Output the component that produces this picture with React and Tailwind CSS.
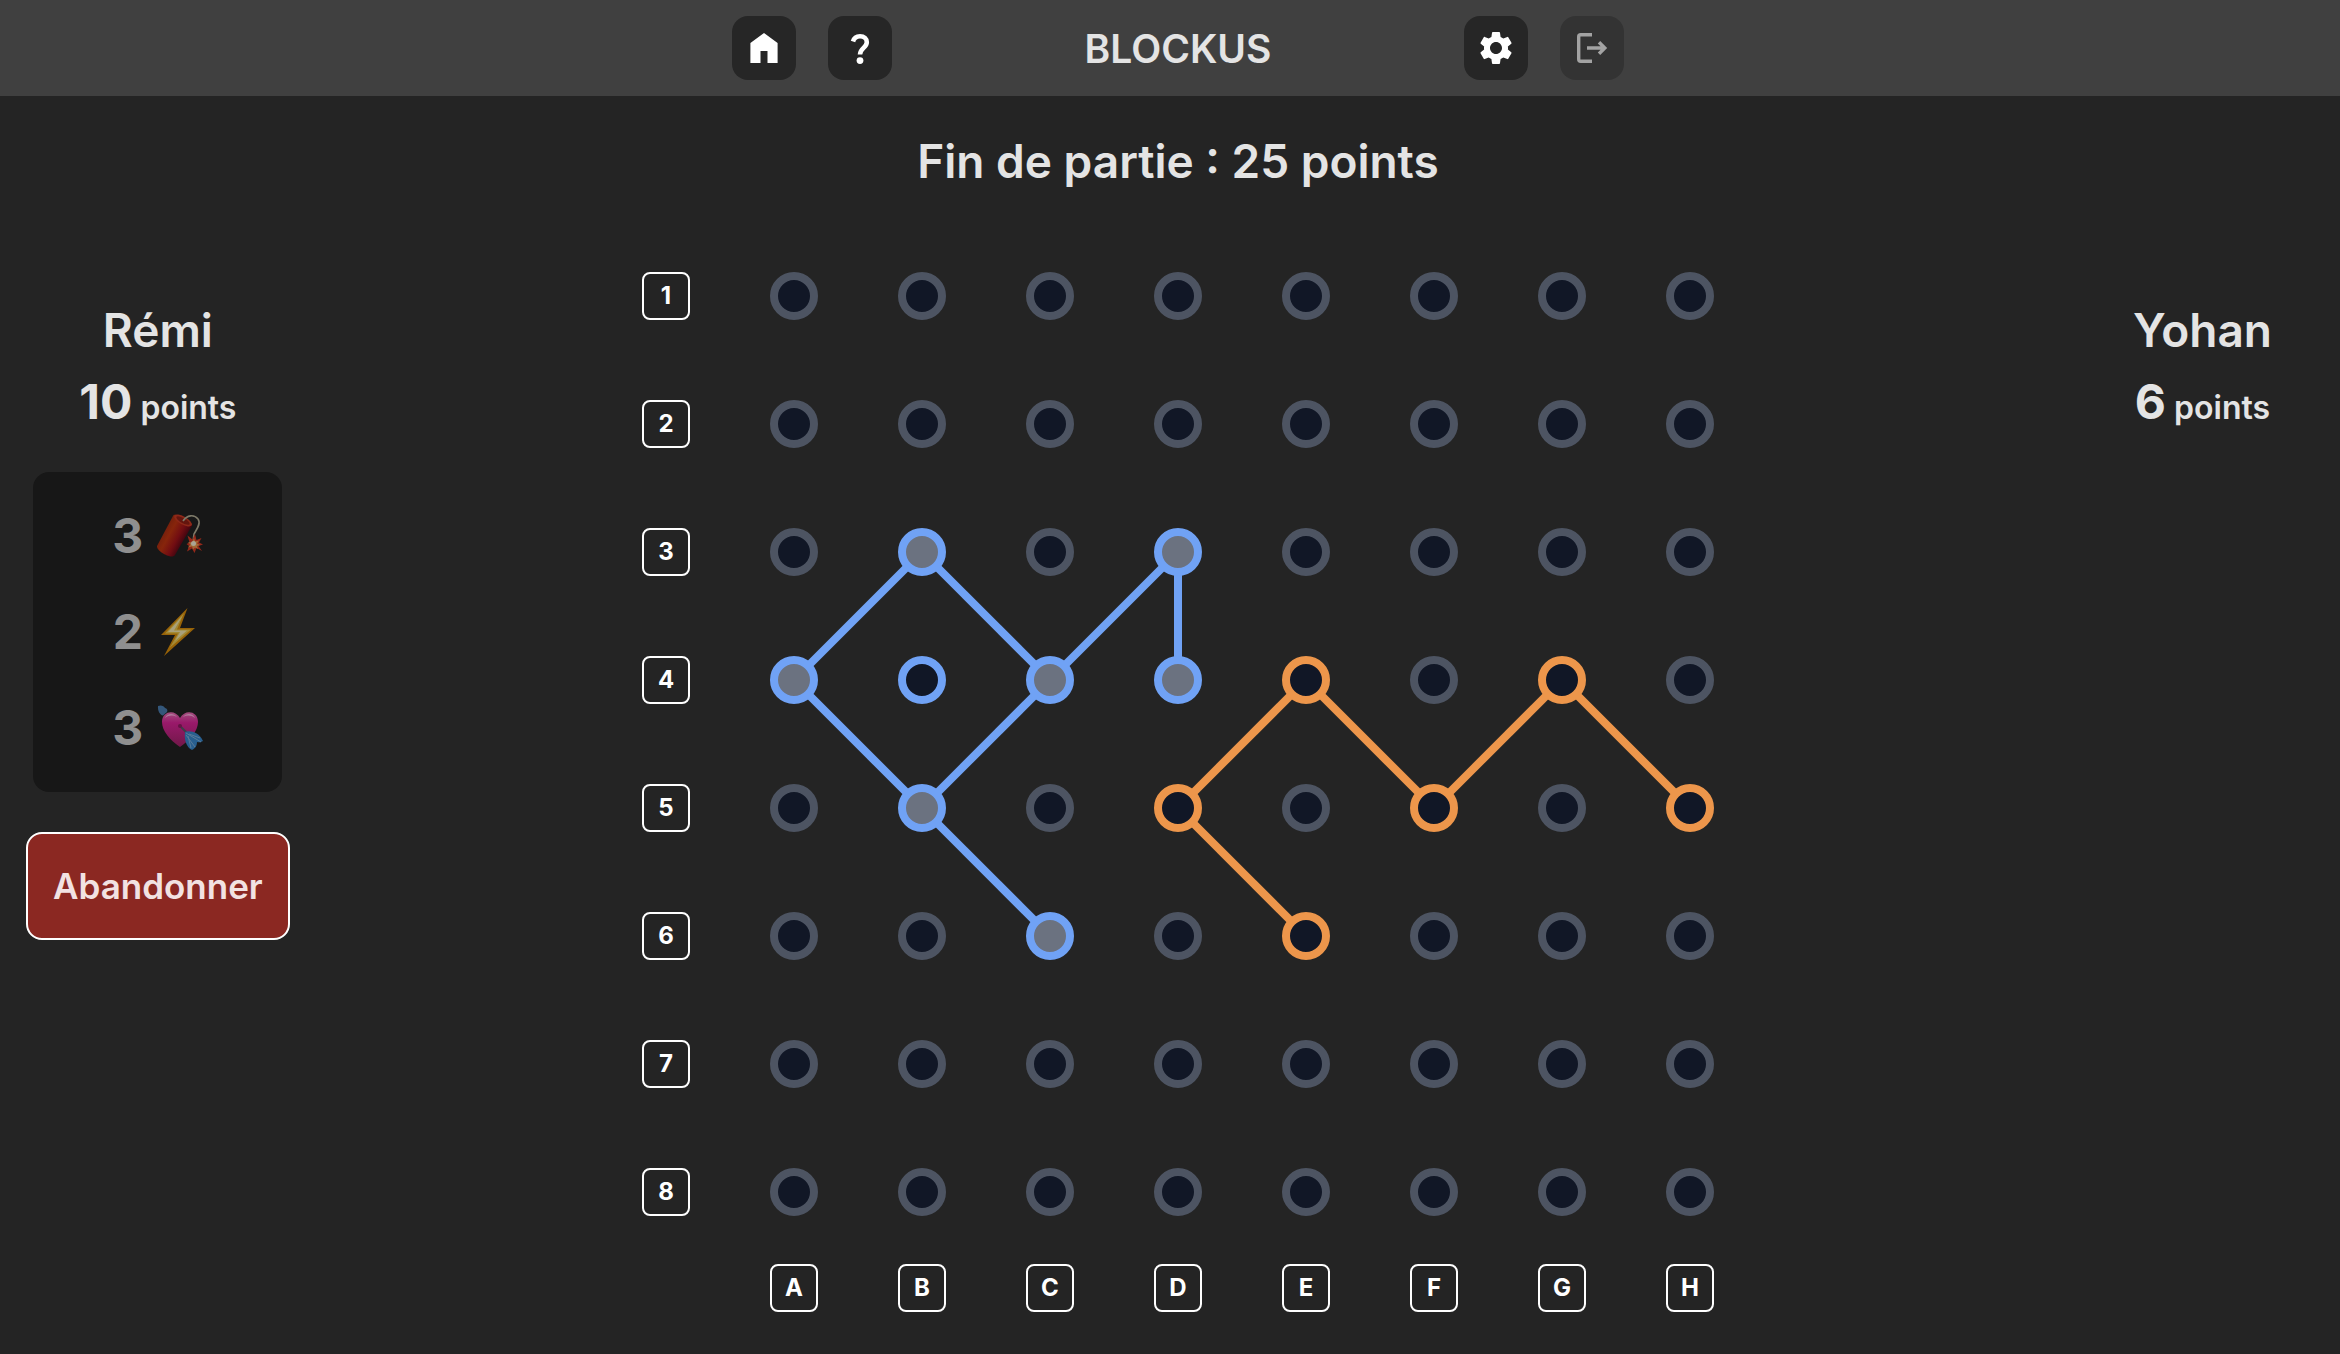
const SIZE = 8;
const STEP = 128;
const BLUE = "#70a2f5";
const ORANGE = "#ed964b";

const ROWS = ["1", "2", "3", "4", "5", "6", "7", "8"];
const COLS = ["A", "B", "C", "D", "E", "F", "G", "H"];

const NODES = {
  B3: "blueFull",
  D3: "blueFull",
  A4: "blueFull",
  B4: "blue",
  C4: "blueFull",
  D4: "blueFull",
  B5: "blueFull",
  C6: "blueFull",
  E4: "orange",
  G4: "orange",
  D5: "orange",
  F5: "orange",
  H5: "orange",
  E6: "orange",
};

const NODE_CLASSES = {
  empty: "border-[#4d5462] bg-[#111726]",
  blue: "border-[#70a2f5] bg-[#111726]",
  blueFull: "border-[#70a2f5] bg-[#6b7280]",
  orange: "border-[#ed964b] bg-[#111726]",
};

const LINKS = [
  ["A4", "B3", BLUE],
  ["B3", "C4", BLUE],
  ["C4", "D3", BLUE],
  ["D3", "D4", BLUE],
  ["A4", "B5", BLUE],
  ["B5", "C4", BLUE],
  ["B5", "C6", BLUE],
  ["D5", "E4", ORANGE],
  ["E4", "F5", ORANGE],
  ["F5", "G4", ORANGE],
  ["G4", "H5", ORANGE],
  ["D5", "E6", ORANGE],
];

function center(id) {
  return {
    x: COLS.indexOf(id[0]) * STEP + 24,
    y: ROWS.indexOf(id[1]) * STEP + 24,
  };
}

function IconButton({ label, disabled, children }) {
  return (
    <button
      type="button"
      aria-label={label}
      disabled={disabled}
      className="flex size-16 items-center justify-center rounded-2xl bg-[#262626] text-white disabled:bg-[#333333] disabled:text-[#a3a3a3]"
    >
      {children}
    </button>
  );
}

function HomeIcon() {
  return (
    <svg viewBox="0 0 40 40" className="size-10" fill="currentColor" aria-hidden="true">
      <path d="M6.400 35V15L20 5l13.600 10v20H23.500V23h-7v12z" />
    </svg>
  );
}

function HelpIcon() {
  return (
    <svg viewBox="0 0 40 40" className="size-10" fill="none" aria-hidden="true">
      <path
        d="M13 13.500C14 10 16.500 8.300 20 8.300c4.200 0 6.800 2.400 6.800 5.900 0 5.500-6.800 6-6.800 12.300"
        stroke="currentColor"
        strokeWidth="4.600"
      />
      <circle cx="20" cy="32.600" r="3.400" fill="currentColor" />
    </svg>
  );
}

function SettingsIcon() {
  return (
    <svg viewBox="0 0 24 24" className="size-10" fill="currentColor" aria-hidden="true">
      <path d="M19.140 12.940c.040-.3.060-.61.060-.94 0-.32-.020-.64-.070-.94l2.030-1.580a.49.49 0 0 0 .120-.61l-1.920-3.320a.488.488 0 0 0-.590-.22l-2.390.96c-.5-.38-1.030-.7-1.620-.94l-.36-2.540a.484.484 0 0 0-.480-.41h-3.840c-.24 0-.43.17-.47.41l-.36 2.540c-.59.24-1.130.57-1.620.94l-2.390-.96c-.22-.080-.47 0-.59.22L2.740 8.870c-.12.210-.080.470.120.610l2.030 1.580c-.050.3-.090.630-.090.940s.020.640.070.940l-2.030 1.580a.49.49 0 0 0-.120.610l1.920 3.320c.12.220.37.290.59.220l2.390-.96c.5.380 1.030.7 1.620.940l.36 2.540c.050.240.240.410.480.410h3.840c.24 0 .44-.17.470-.41l.36-2.540c.59-.24 1.130-.56 1.620-.94l2.390.96c.22.080.470 0 .590-.22l1.920-3.320c.12-.22.070-.470-.120-.610l-2.010-1.580zM12 15.600c-1.980 0-3.600-1.620-3.600-3.600s1.620-3.600 3.600-3.600 3.600 1.620 3.600 3.600-1.620 3.600-3.600 3.600z" />
    </svg>
  );
}

function LeaveIcon() {
  return (
    <svg viewBox="0 0 40 40" className="size-10" fill="none" stroke="currentColor" strokeWidth="3.400" aria-hidden="true">
      <path d="M20 6.700H8.700a2 2 0 0 0-2 2v22.600a2 2 0 0 0 2 2H20" />
      <path d="M15 20h17M27 14.200l5.800 5.800-5.800 5.800" />
    </svg>
  );
}

function DynamiteIcon() {
  return (
    <svg viewBox="0 0 48 48" className="size-12" aria-hidden="true">
      <defs>
        <linearGradient id="stick" x1="8" y1="16" x2="30" y2="28" gradientUnits="userSpaceOnUse">
          <stop offset="0" stopColor="#6e1d0c" />
          <stop offset="0.35" stopColor="#87250b" />
          <stop offset="0.7" stopColor="#720d12" />
          <stop offset="1" stopColor="#3d0410" />
        </linearGradient>
      </defs>
      <path d="M18.500 3C22 1.500 36 8 37 13.500L20 43c-3 5-19-4-18-9z" fill="url(#stick)" />
      <ellipse cx="28" cy="8.500" rx="10" ry="4" transform="rotate(29 28 8.500)" fill="#8d2818" />
      <ellipse cx="28" cy="8.500" rx="7.500" ry="2.500" transform="rotate(29 28 8.500)" fill="#64150e" />
      <path d="M28 9c4-6 11-7 15-2 3.500 5-2 11-4 15l-1 8" fill="none" stroke="#7d7968" strokeWidth="1.600" />
      <path d="M40 22l1.500 6 5-2-2.500 4.500 4 2-4.500 1.500 3.500 5-5.500-3-2 5-2.500-4.500-5 3 2-5.500-2.500-2 3-1.500-2-7 5 4z" fill="#94281a" />
      <path d="M39 26l1 3.500 4-1-2 3 3 1.500-3 1 1 3-3-1.500-2 2-1-3-4 1 2.500-3-2.500-2.500 4 .5z" fill="#a26a36" />
      <circle cx="38.500" cy="31.500" r="2.500" fill="#aaa594" />
    </svg>
  );
}

function BoltIcon() {
  return (
    <svg viewBox="0 0 48 48" className="size-12" aria-hidden="true">
      <path d="M32.500 0L6 27h14L9 48l31-28H25z" fill="#976207" />
      <path d="M29 5L10 25.500h13L14.500 40 36 21.500H22z" fill="#a38a35" />
      <path d="M27 8.500L13 24h12l-5 9 12-10.500H19z" fill="#aaa17b" />
    </svg>
  );
}

function HeartIcon() {
  return (
    <svg viewBox="0 0 48 48" className="size-12" aria-hidden="true">
      <defs>
        <linearGradient id="heart" x1="0" y1="8" x2="0" y2="44" gradientUnits="userSpaceOnUse">
          <stop offset="0" stopColor="#a3507f" />
          <stop offset="0.3" stopColor="#99196a" />
          <stop offset="1" stopColor="#6f1847" />
        </linearGradient>
      </defs>
      <path d="M3 2c3-1.500 6 0 7 2 2 .5 3 2 2 4l-4 3.500C5 11 2.500 7 3 2z" fill="#34577a" />
      <path d="M25 43C15 36 7 27 7 18 7 7 20 5 25 14 30 5 43 7 43 18c0 9-8 18-18 25z" fill="url(#heart)" />
      <path d="M10 14c2-5 9-5 12-1-4-2-8-2-12 1zM28 13c3-4 10-4 12 1-4-3-8-3-12-1z" fill="#b17b9c" />
      <path d="M25 22l12 12" stroke="#3a3f48" strokeWidth="2" />
      <path d="M30 28c5-2 14 0 18 9-3 2-5 1-6 1 0 3-1 6-5 8-6-3-8-11-7-18z" fill="#285f8f" />
      <path d="M31 29l15 9M31 31l9 12M33 32l3 12M34 30l11 4" stroke="#5a7b98" strokeWidth="1" />
      <circle cx="25" cy="22" r="2" fill="#641344" />
    </svg>
  );
}

const ABILITIES = [
  { count: 3, name: "Dynamite", Icon: DynamiteIcon },
  { count: 2, name: "Éclair", Icon: BoltIcon },
  { count: 3, name: "Coeur", Icon: HeartIcon },
];

function PlayerScore({ name, points }) {
  return (
    <div className="text-center">
      <h2 className="text-[46px] leading-[72px]">{name}</h2>
      <p className="text-[32px] leading-[72px]">
        <span className="text-5xl leading-[72px] font-bold">{points}</span> points
      </p>
    </div>
  );
}

function Label({ children }) {
  return (
    <span className="flex size-12 items-center justify-center rounded-lg border-2 border-white text-2xl font-bold text-white">
      {children}
    </span>
  );
}

function Board() {
  const extent = (SIZE - 1) * STEP + 48;
  return (
    <div className="grid grid-cols-[auto_auto] gap-x-20 gap-y-12">
      <div className="flex flex-col gap-20">
        {ROWS.map((row) => (
          <Label key={row}>{row}</Label>
        ))}
      </div>
      <div className="relative">
        <svg viewBox={`0 0 ${extent} ${extent}`} className="absolute inset-0 size-full" aria-hidden="true">
          {LINKS.map(([from, to, color]) => {
            const a = center(from);
            const b = center(to);
            return <line key={from + to} x1={a.x} y1={a.y} x2={b.x} y2={b.y} stroke={color} strokeWidth="8" />;
          })}
        </svg>
        <div className="relative grid grid-cols-8 gap-20">
          {ROWS.flatMap((row) =>
            COLS.map((col) => (
              <button
                key={col + row}
                type="button"
                aria-label={col + row}
                className={`size-12 rounded-full border-8 ${NODE_CLASSES[NODES[col + row] ?? "empty"]}`}
              />
            )),
          )}
        </div>
      </div>
      <div className="col-start-2 grid grid-cols-8 gap-20">
        {COLS.map((col) => (
          <Label key={col}>{col}</Label>
        ))}
      </div>
    </div>
  );
}

export default function App() {
  return (
    <div className="min-h-screen bg-[#242424] font-['Inter',sans-serif] font-semibold text-[#e4e4e4]">
      <header className="flex items-center justify-center bg-[#404040] py-4 pl-4">
        <nav className="flex w-[892px] items-center justify-between">
          <div className="flex gap-8">
            <IconButton label="Accueil">
              <HomeIcon />
            </IconButton>
            <IconButton label="Aide">
              <HelpIcon />
            </IconButton>
          </div>
          <h1 className="pt-0.5 text-[39px] leading-[48px]">BLOCKUS</h1>
          <div className="flex gap-8">
            <IconButton label="Paramètres">
              <SettingsIcon />
            </IconButton>
            <IconButton label="Quitter" disabled>
              <LeaveIcon />
            </IconButton>
          </div>
        </nav>
      </header>

      <main className="grid grid-cols-[1fr_auto_1fr] pl-4">
        <aside className="flex flex-col items-center justify-self-start pt-[198px] pl-[10px]">
          <PlayerScore name="Rémi" points={10} />
          <ul className="mt-7 flex w-[249px] flex-col rounded-2xl bg-[#171717] py-4 text-5xl font-bold text-[#8f8f8f]">
            {ABILITIES.map(({ count, name, Icon }) => (
              <li key={name} title={name} className="flex h-24 items-center justify-center gap-3">
                {count}
                <Icon />
              </li>
            ))}
          </ul>
          <button
            type="button"
            className="mt-10 h-[108px] rounded-2xl border-2 border-white bg-[#8b2822] px-[25px] text-[35px] text-[#f2e2e2]"
          >
            Abandonner
          </button>
        </aside>

        <section className="flex flex-col items-center pt-8 pb-10">
          <h2 className="mb-[78px] text-[46px] leading-[66px]">Fin de partie : 25 points</h2>
          <Board />
        </section>

        <aside className="justify-self-end pt-[198px] pr-[68px]">
          <PlayerScore name="Yohan" points={6} />
        </aside>
      </main>
    </div>
  );
}
